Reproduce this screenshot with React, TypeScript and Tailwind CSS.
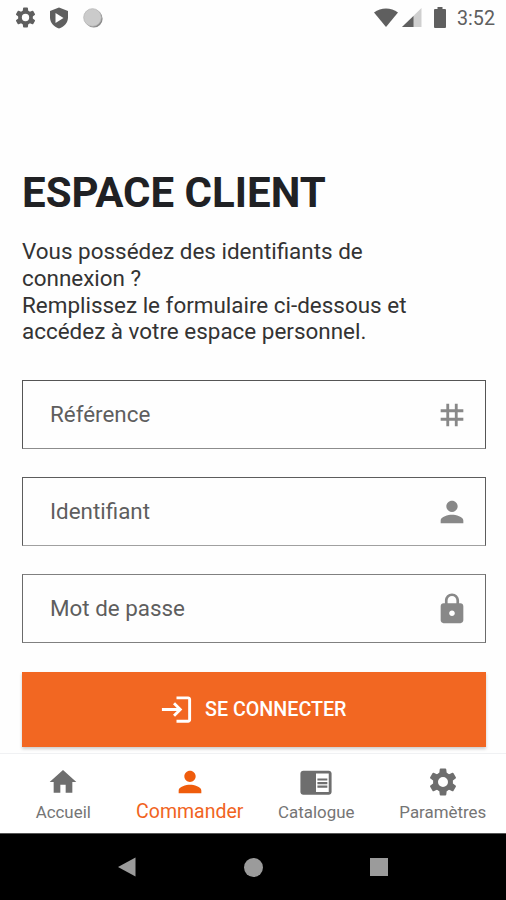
import type { ComponentType } from 'react';
import { MdChromeReaderMode, MdHome, MdLock, MdLogin, MdPerson, MdTag } from 'react-icons/md';

type Icon = ComponentType<{ className?: string }>;

interface Field {
  label: string;
  icon: Icon;
  border: string;
}

interface Tab {
  label: string;
  icon: Icon;
  size?: string;
  active?: boolean;
}

const teeth = [0, 60, 120, 180, 240, 300];

function Gear({ className }: { className?: string }) {
  return (
    <svg viewBox="0 0 34 34" className={className} fill="none" stroke="currentColor">
      <circle cx="17" cy="17" r="7.500" strokeWidth="5" />
      {teeth.map((angle) => (
        <path
          key={angle}
          d="M14.200 9l0.500-4.500h4.600l0.500 4.500z"
          fill="currentColor"
          strokeWidth="2"
          strokeLinejoin="round"
          transform={`rotate(${angle} 17 17)`}
        />
      ))}
    </svg>
  );
}

const fields: Field[] = [
  { label: 'Référence', icon: MdTag, border: 'border-[#555] border-b-[#8c8c8c]' },
  { label: 'Identifiant', icon: MdPerson, border: 'border-[#5c5c5c] border-b-[#a0a0a0]' },
  { label: 'Mot de passe', icon: MdLock, border: 'border-[#6a6a6a] border-t-[#808080] border-b-[#808080]' },
];

const tabs: Tab[] = [
  { label: 'Accueil', icon: MdHome, size: 'size-[32px] my-px' },
  { label: 'Commander', icon: MdPerson, active: true },
  { label: 'Catalogue', icon: MdChromeReaderMode },
  { label: 'Paramètres', icon: Gear },
];

function StatusBar() {
  return (
    <header className="flex h-[35px] items-center justify-between pl-[13px] pr-[11px] text-[#5f5f5f]">
      <div className="flex items-center">
        <Gear className="size-[25px]" />
        <svg viewBox="0 0 20 22" className="ml-[11px] h-[22px] w-[20px]">
          <path d="M10 0.500L19 4v6.500c0 5-3.600 9.300-9 11-5.400-1.700-9-6-9-11V4z" fill="currentColor" />
          <path d="M6.500 6v10l8-5z" fill="#fff" />
        </svg>
        <svg viewBox="0 0 20 20" className="ml-[14px] size-5">
          <circle cx="10.800" cy="10.800" r="8.800" fill="#8a8a8a" />
          <circle cx="9.500" cy="9.500" r="8.800" fill="#cbcbcb" stroke="#b5b5b5" strokeWidth="0.800" />
        </svg>
      </div>
      <div className="flex items-center">
        <svg viewBox="0 0 24 19" className="h-[19px] w-6">
          <path d="M0 4.500C7-1 17-1 24 4.500L12 19z" fill="currentColor" />
        </svg>
        <svg viewBox="0 0 20 19" className="ml-[4px] h-[19px] w-5">
          <path d="M19.500 0v19H0z" fill="#cfcfcf" />
          <path d="M11.500 8v11H0z" fill="currentColor" />
        </svg>
        <svg viewBox="0 0 12 21" className="ml-[12px] h-[21px] w-3">
          <path d="M3.500 0h5v2H11q1 0 1 1v17q0 1-1 1H1q-1 0-1-1V3q0-1 1-1h2.500z" fill="currentColor" />
        </svg>
        <span className="ml-[11px] mt-[2px] text-[19.700px] leading-6">3:52</span>
      </div>
    </header>
  );
}

function LoginField({ label, icon: FieldIcon, border }: Field) {
  return (
    <label className={`flex h-[69px] items-center justify-between border pl-[27px] pr-[16px] ${border}`}>
      <span className="mt-px text-[22.400px] text-[#5e5e5e]">{label}</span>
      <FieldIcon className="mt-px size-[34px] text-[#888]" />
    </label>
  );
}

function TabBar() {
  return (
    <nav className="relative grid h-[80px] grid-cols-4 border-t border-[#f0f1f3] bg-white">
      {tabs.map(({ label, icon: TabIcon, size = 'size-[34px]', active }) => (
        <button
          key={label}
          className={`flex flex-col items-center pt-[11px] ${active ? 'text-[#f1641e]' : 'text-[#757575]'}`}
        >
          <TabIcon className={`${size} ${active ? 'text-[#ef5c0c]' : 'text-[#6e6e6e]'}`} />
          <span className={active ? 'mt-px text-[19.500px] leading-[23px]' : 'mt-[2px] text-[16.900px] leading-[22px]'}>
            {label}
          </span>
        </button>
      ))}
    </nav>
  );
}

function SystemBar() {
  return (
    <footer className="flex h-[67px] items-center justify-center gap-[107px] border-t border-[#555] bg-black pr-px text-[#9b9b9b]">
      <svg viewBox="0 0 20 20" className="size-5" fill="currentColor">
        <path d="M18.500 0.500v19L1 10z" />
      </svg>
      <span className="size-[19px] rounded-full bg-current" />
      <span className="size-[18px] bg-current" />
    </footer>
  );
}

export default function App() {
  return (
    <div className="flex h-[900px] w-[506px] flex-col overflow-hidden bg-[#fefefe] font-[Roboto,sans-serif]">
      <StatusBar />
      <main className="flex flex-1 flex-col pl-[22px] pr-[20.500px] pt-[133px]">
        <h1 className="text-[42px] font-bold leading-[50px] text-[#202124]">ESPACE CLIENT</h1>
        <p className="mt-[20px] whitespace-nowrap text-[22.450px] leading-[26.800px] text-[#333]">
          Vous possédez des identifiants de
          <br />
          connexion ?
          <br />
          Remplissez le formulaire ci-dessous et
          <br />
          accédez à votre espace personnel.
        </p>
        <form className="mt-[35px] flex flex-col gap-[28px]">
          {fields.map((field) => (
            <LoginField key={field.label} {...field} />
          ))}
          <button
            type="button"
            className="mt-px flex h-[75px] items-center justify-center gap-[11px] bg-[#f26722] pr-[2px] text-white shadow-[0_2px_3px_rgba(0,0,0,0.2)]"
          >
            <MdLogin className="size-[35px]" />
            <span className="mt-px text-[19.700px] font-medium">SE CONNECTER</span>
          </button>
        </form>
      </main>
      <TabBar />
      <SystemBar />
    </div>
  );
}
